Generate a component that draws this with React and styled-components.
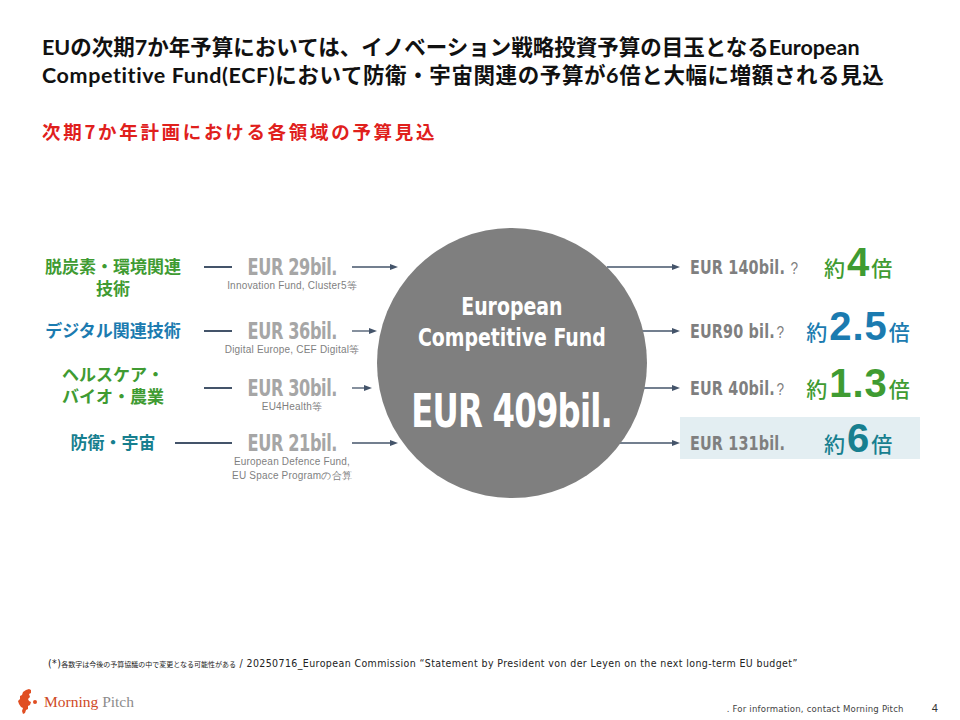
import React from 'react'
import styled, { createGlobalStyle } from 'styled-components'

const JP = `"Noto Sans CJK JP", "Noto Sans", sans-serif`
const TITLE = `Lato, "Noto Sans CJK JP", sans-serif`
const NARROW = `"Liberation Sans Narrow", "DejaVu Sans Condensed", "Liberation Sans", sans-serif`

const GREEN = '#3f9b32'
const BLUE = '#1b7bb0'
const TEAL = '#177f8f'
const NAVY = '#44546a'

const sources = [
  { label: ['脱炭素・環境関連', '技術'], color: GREEN, amount: 'EUR 29bil.', note: ['Innovation Fund, Cluster5等'], dash: 28, arrow: 46, height: 64, shift: 0 },
  { label: ['デジタル関連技術'], color: BLUE, amount: 'EUR 36bil.', note: ['Digital Europe, CEF Digital等'], dash: 28, arrow: 25, height: 57, shift: 0 },
  { label: ['ヘルスケア・', 'バイオ・農業'], color: GREEN, amount: 'EUR 30bil.', note: ['EU4Health等'], dash: 28, arrow: 20, height: 55, shift: -13 },
  { label: ['防衛・宇宙'], color: TEAL, amount: 'EUR 21bil.', note: ['European Defence Fund,', 'EU Space Programの合算'], dash: 57, arrow: 46, height: 60, shift: 0 },
]

const targets = [
  { amount: 'EUR 140bil.', mark: ' ?', num: '4', color: GREEN, height: 64 },
  { amount: 'EUR90 bil.', mark: '?', num: '2.5', color: BLUE, height: 57 },
  { amount: 'EUR 40bil.', mark: '?', num: '1.3', color: GREEN, height: 55 },
  { amount: 'EUR 131bil.', mark: '', num: '6', color: TEAL, height: 60, highlight: true },
]

const GlobalStyle = createGlobalStyle`
  html, body { margin: 0; padding: 0; background: #fff; }
  body { font-family: ${JP}; }
`

const Page = styled.div`
  width: 960px;
  height: 720px;
  display: flex;
  flex-direction: column;
  overflow: hidden;
  background: #fff;
`

const Header = styled.header`
  padding: 33px 0 0 42px;
`

const Title = styled.h1`
  margin: 0;
  font-family: ${TITLE};
  font-size: 21.5px;
  line-height: 28px;
  font-weight: 700;
  color: #111;
  white-space: nowrap;
`

const TitleLine = styled.span`
  letter-spacing: ${p => p.$spacing || 0}px;
`

const Subtitle = styled.h2`
  margin: 30px 0 0;
  font-size: 18.5px;
  line-height: 24px;
  font-weight: 700;
  letter-spacing: 2.7px;
  color: #e0201c;
`

const Diagram = styled.section`
  display: flex;
  align-items: flex-start;
  margin-top: 85px;
  padding-left: 30px;
`

const SourceList = styled.div`
  padding-top: 27px;
`

const SourceRow = styled.div`
  display: grid;
  grid-template-columns: 166px 36px 120px 46px;
  align-items: start;
  height: ${p => p.$height}px;
`

const Label = styled.div`
  margin-top: ${p => p.$shift}px;
  text-align: center;
  font-size: 17px;
  line-height: 22px;
  font-weight: 700;
  color: ${p => p.$color};
  white-space: nowrap;
`

const DashCell = styled.div`
  height: 24px;
  display: flex;
  align-items: center;
  justify-content: flex-end;
`

const Dash = styled.span`
  flex: none;
  width: ${p => p.$width}px;
  height: 1.3px;
  background: ${NAVY};
`

const AmountCell = styled.div`
  display: flex;
  flex-direction: column;
  align-items: center;
`

const Amount = styled.div`
  font-family: ${NARROW};
  font-weight: 700;
  font-size: 23px;
  line-height: 24px;
  letter-spacing: -0.5px;
  color: #a6a6a6;
  white-space: nowrap;
  transform: scaleX(0.78);
`

const Note = styled.div`
  font-family: "Liberation Sans", sans-serif;
  font-size: 10px;
  line-height: 14px;
  letter-spacing: 0.2px;
  color: #7f7f7f;
  white-space: nowrap;
`

const ArrowCell = styled.div`
  height: 24px;
  display: flex;
  align-items: center;
`

const Circle = styled.div`
  position: relative;
  z-index: 1;
  flex: none;
  width: 270px;
  height: 270px;
  margin-left: -21px;
  border-radius: 50%;
  background: #7f7f7f;
  display: flex;
  flex-direction: column;
  align-items: center;
  justify-content: center;
  font-family: ${NARROW};
  font-weight: 700;
  color: #fff;
  text-align: center;
`

const FundName = styled.div`
  font-size: 25px;
  line-height: 31px;
  margin-bottom: 33px;
  white-space: nowrap;
  transform: scaleX(0.84);
`

const FundTotal = styled.div`
  font-size: 46px;
  line-height: 50px;
  letter-spacing: -1px;
  white-space: nowrap;
  transform: scaleX(0.78);
`

const TargetList = styled.div`
  position: relative;
  z-index: 0;
  margin-left: -40px;
  padding-top: 27px;
`

const TargetRow = styled.div`
  display: grid;
  grid-template-columns: 73px auto;
  align-items: start;
  height: ${p => p.$height}px;
`

const Panel = styled.div`
  display: grid;
  grid-template-columns: 108px 120px;
  align-items: center;
  padding: ${p => (p.$highlight ? '14px 2px 4px 10px' : '0 2px 0 10px')};
  margin-top: ${p => (p.$highlight ? '-14px' : '0')};
  background: ${p => (p.$highlight ? '#e3eef2' : 'transparent')};
`

const TargetAmount = styled.div`
  height: 24px;
  line-height: 24px;
  font-family: ${NARROW};
  font-weight: 700;
  font-size: 20px;
  letter-spacing: 0.2px;
  color: #7f7f7f;
  white-space: nowrap;
  transform: scaleX(0.8);
  transform-origin: left center;
`

const Mark = styled.span`
  font-family: "Liberation Sans", sans-serif;
  font-weight: 400;
  font-size: 17px;
  letter-spacing: 0;
  margin-left: 2px;
`

const ValueCell = styled.div`
  height: 24px;
  display: flex;
  align-items: center;
  justify-content: center;
`

const Value = styled.div`
  display: flex;
  align-items: baseline;
  margin-top: -10px;
  color: ${p => p.$color};
  line-height: 1;
  white-space: nowrap;
`

const Unit = styled.span`
  font-size: 21px;
  font-weight: 500;
`

const Multiple = styled.span`
  font-family: "Liberation Sans", Arial, sans-serif;
  font-weight: 700;
  font-size: 40px;
  letter-spacing: 1px;
  margin: 0 1px 0 2px;
`

const Footnote = styled.p`
  margin: auto 0 13px 48px;
  font-family: ${NARROW};
  font-size: 10.5px;
  line-height: 14px;
  letter-spacing: 0.4px;
  color: #222;
  white-space: nowrap;
`

const FootJp = styled.span`
  font-family: ${JP};
  font-size: 7px;
  letter-spacing: 0;
`

const FooterBar = styled.footer`
  height: 36px;
  display: flex;
  align-items: center;
  justify-content: space-between;
  padding: 0 18px;
`

const Brand = styled.div`
  display: flex;
  align-items: center;
  gap: 6px;
  font-family: "Liberation Serif", serif;
  font-size: 15.5px;
`

const BrandWord = styled.span`
  color: ${p => p.$color};
`

const Contact = styled.div`
  align-self: flex-end;
  padding-bottom: 6px;
  display: flex;
  align-items: baseline;
  gap: 28px;
  font-family: ${NARROW};
  font-size: 9.5px;
  letter-spacing: 0.2px;
  color: #444;
`

const PageNo = styled.span`
  font-family: "Liberation Sans", sans-serif;
  font-size: 11px;
  color: #333;
  margin-right: 4px;
`

const Arrow = ({ width }) => (
  <svg width={width} height="8" viewBox={`0 0 ${width} 8`}>
    <line x1="0" y1="4" x2={width - 6} y2="4" stroke={NAVY} strokeWidth="1.3" />
    <path d={`M${width - 8} 1 L${width} 4 L${width - 8} 7 Z`} fill={NAVY} />
  </svg>
)

const Logo = () => (
  <svg width="20" height="26" viewBox="0 0 20 26">
    <path
      d="M8 1 L11 0 L13 1 L13 4 L11 5 L12 8 L10 10 L11 12 L13 13 L12 16 L10 17 L10 20 L8 21 L7 24 L5 25 L4 22 L5 19 L3 18 L1 15 L0 12 L2 10 L2 7 L4 6 L5 3 Z"
      fill="#e04e22"
    />
    <circle cx="17" cy="13" r="2" fill="#e04e22" />
  </svg>
)

function App() {
  return (
    <Page>
      <GlobalStyle />
      <Header>
        <Title>
          <TitleLine>EUの次期7か年予算においては、イノベーション戦略投資予算の目玉となるEuropean</TitleLine>
          <br />
          <TitleLine $spacing={0.6}>Competitive Fund(ECF)において防衛・宇宙関連の予算が6倍と大幅に増額される見込</TitleLine>
        </Title>
        <Subtitle>次期7か年計画における各領域の予算見込</Subtitle>
      </Header>

      <Diagram>
        <SourceList>
          {sources.map((s) => (
            <SourceRow key={s.amount} $height={s.height}>
              <Label $color={s.color} $shift={s.shift}>
                {s.label.map((l) => <div key={l}>{l}</div>)}
              </Label>
              <DashCell>
                <Dash $width={s.dash} />
              </DashCell>
              <AmountCell>
                <Amount>{s.amount}</Amount>
                {s.note.map((n) => <Note key={n}>{n}</Note>)}
              </AmountCell>
              <ArrowCell>
                <Arrow width={s.arrow} />
              </ArrowCell>
            </SourceRow>
          ))}
        </SourceList>

        <Circle>
          <FundName>
            European
            <br />
            Competitive Fund
          </FundName>
          <FundTotal>EUR 409bil.</FundTotal>
        </Circle>

        <TargetList>
          {targets.map((t) => (
            <TargetRow key={t.amount} $height={t.height}>
              <ArrowCell>
                <Arrow width={73} />
              </ArrowCell>
              <Panel $highlight={t.highlight}>
                <TargetAmount>
                  {t.amount}
                  {t.mark && <Mark>{t.mark}</Mark>}
                </TargetAmount>
                <ValueCell>
                  <Value $color={t.color}>
                    <Unit>約</Unit>
                    <Multiple>{t.num}</Multiple>
                    <Unit>倍</Unit>
                  </Value>
                </ValueCell>
              </Panel>
            </TargetRow>
          ))}
        </TargetList>
      </Diagram>

      <Footnote>
        (*)<FootJp>各数字は今後の予算協議の中で変更となる可能性がある</FootJp> / 20250716_European Commission “Statement by President von der Leyen on the next long-term EU budget”
      </Footnote>

      <FooterBar>
        <Brand>
          <Logo />
          <span>
            <BrandWord $color="#cf4a26">Morning</BrandWord> <BrandWord $color="#8c8c8c">Pitch</BrandWord>
          </span>
        </Brand>
        <Contact>
          <span>. For information, contact Morning Pitch</span>
          <PageNo>4</PageNo>
        </Contact>
      </FooterBar>
    </Page>
  )
}

export default App
